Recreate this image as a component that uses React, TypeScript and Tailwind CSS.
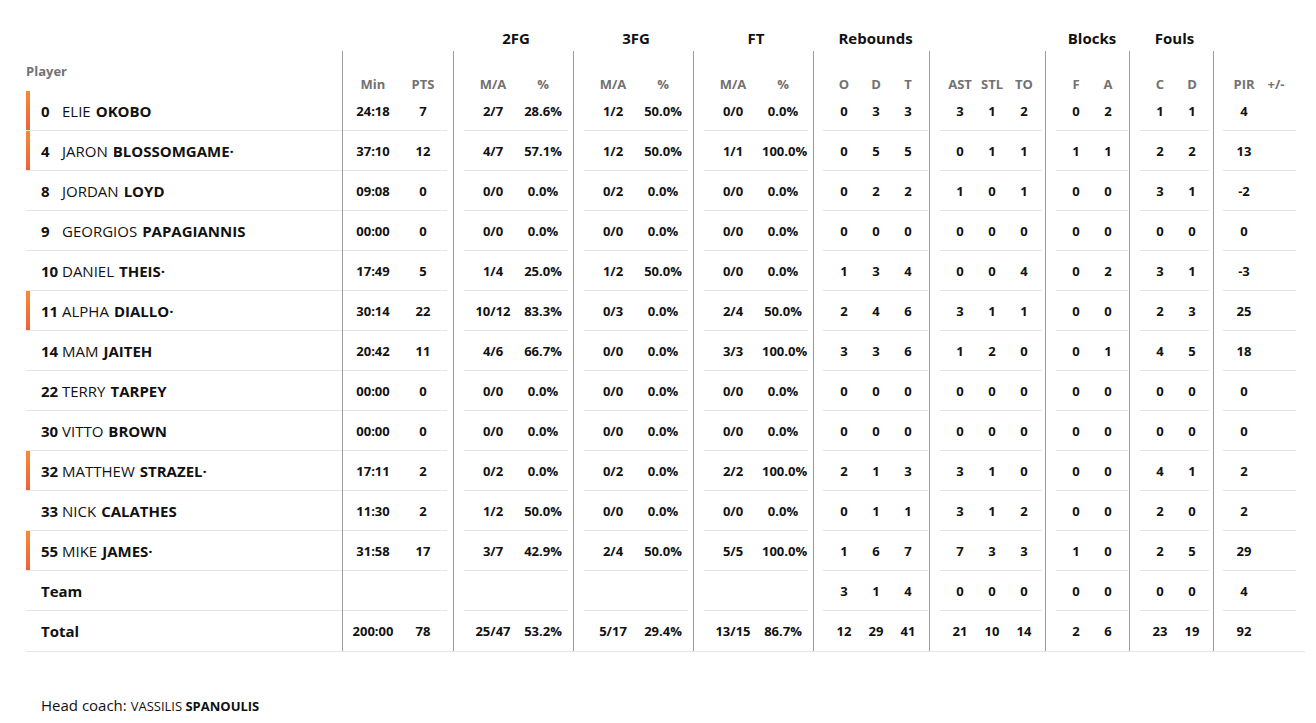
import React from "react";

type P = {
  no: string;
  first: string;
  last: string;
  starter?: boolean;
  kind?: "team" | "total";
  label?: string;
  s: string[];
};

// s: Min, PTS, 2M/A, 2%, 3M/A, 3%, FTM/A, FT%, O, D, T, AST, STL, TO, F, A, C, D, PIR, +/-
const ROWS: P[] = [
  { no: "0", first: "ELIE", last: "OKOBO", starter: true, s: ["24:18", "7", "2/7", "28.6%", "1/2", "50.0%", "0/0", "0.0%", "0", "3", "3", "3", "1", "2", "0", "2", "1", "1", "4", ""] },
  { no: "4", first: "JARON", last: "BLOSSOMGAME·", starter: true, s: ["37:10", "12", "4/7", "57.1%", "1/2", "50.0%", "1/1", "100.0%", "0", "5", "5", "0", "1", "1", "1", "1", "2", "2", "13", ""] },
  { no: "8", first: "JORDAN", last: "LOYD", s: ["09:08", "0", "0/0", "0.0%", "0/2", "0.0%", "0/0", "0.0%", "0", "2", "2", "1", "0", "1", "0", "0", "3", "1", "-2", ""] },
  { no: "9", first: "GEORGIOS", last: "PAPAGIANNIS", s: ["00:00", "0", "0/0", "0.0%", "0/0", "0.0%", "0/0", "0.0%", "0", "0", "0", "0", "0", "0", "0", "0", "0", "0", "0", ""] },
  { no: "10", first: "DANIEL", last: "THEIS·", s: ["17:49", "5", "1/4", "25.0%", "1/2", "50.0%", "0/0", "0.0%", "1", "3", "4", "0", "0", "4", "0", "2", "3", "1", "-3", ""] },
  { no: "11", first: "ALPHA", last: "DIALLO·", starter: true, s: ["30:14", "22", "10/12", "83.3%", "0/3", "0.0%", "2/4", "50.0%", "2", "4", "6", "3", "1", "1", "0", "0", "2", "3", "25", ""] },
  { no: "14", first: "MAM", last: "JAITEH", s: ["20:42", "11", "4/6", "66.7%", "0/0", "0.0%", "3/3", "100.0%", "3", "3", "6", "1", "2", "0", "0", "1", "4", "5", "18", ""] },
  { no: "22", first: "TERRY", last: "TARPEY", s: ["00:00", "0", "0/0", "0.0%", "0/0", "0.0%", "0/0", "0.0%", "0", "0", "0", "0", "0", "0", "0", "0", "0", "0", "0", ""] },
  { no: "30", first: "VITTO", last: "BROWN", s: ["00:00", "0", "0/0", "0.0%", "0/0", "0.0%", "0/0", "0.0%", "0", "0", "0", "0", "0", "0", "0", "0", "0", "0", "0", ""] },
  { no: "32", first: "MATTHEW", last: "STRAZEL·", starter: true, s: ["17:11", "2", "0/2", "0.0%", "0/2", "0.0%", "2/2", "100.0%", "2", "1", "3", "3", "1", "0", "0", "0", "4", "1", "2", ""] },
  { no: "33", first: "NICK", last: "CALATHES", s: ["11:30", "2", "1/2", "50.0%", "0/0", "0.0%", "0/0", "0.0%", "0", "1", "1", "3", "1", "2", "0", "0", "2", "0", "2", ""] },
  { no: "55", first: "MIKE", last: "JAMES·", starter: true, s: ["31:58", "17", "3/7", "42.9%", "2/4", "50.0%", "5/5", "100.0%", "1", "6", "7", "7", "3", "3", "1", "0", "2", "5", "29", ""] },
  { no: "", first: "", last: "", kind: "team", label: "Team", s: ["", "", "", "", "", "", "", "", "3", "1", "4", "0", "0", "0", "0", "0", "0", "0", "4", ""] },
  { no: "", first: "", last: "", kind: "total", label: "Total", s: ["200:00", "78", "25/47", "53.2%", "5/17", "29.4%", "13/15", "86.7%", "12", "29", "41", "21", "10", "14", "2", "6", "23", "19", "92", ""] },
];

type G = {
  title: string;
  outer: string;
  body: string;
  titlePad: string;
  spacer: string;
  cols: string[];
  heads: string[];
  start: number;
};

const GROUPS: G[] = [
  { title: "", outer: "w-[111px]", body: "border-l border-[#9b9b9b] pl-0 pr-[6px]", titlePad: "pl-[1px] pr-[6px]", spacer: "w-0", cols: ["w-[60px]", "w-[40px]"], heads: ["Min", "PTS"], start: 0 },
  { title: "2FG", outer: "w-[120px]", body: "border-l border-[#9b9b9b] pl-[10px] pr-[5px]", titlePad: "pl-[11px] pr-[5px]", spacer: "w-0", cols: ["w-[58px]", "w-[42px]"], heads: ["M/A", "%"], start: 2 },
  { title: "3FG", outer: "w-[120px]", body: "border-l border-[#9b9b9b] pl-[10px] pr-[5px]", titlePad: "pl-[11px] pr-[5px]", spacer: "w-0", cols: ["w-[58px]", "w-[42px]"], heads: ["M/A", "%"], start: 4 },
  { title: "FT", outer: "w-[120px]", body: "border-l border-[#9b9b9b] pl-[10px] pr-[5px]", titlePad: "pl-[11px] pr-[5px]", spacer: "w-0", cols: ["w-[58px]", "w-[42px]"], heads: ["M/A", "%"], start: 6 },
  { title: "Rebounds", outer: "w-[116px]", body: "border-l border-[#9b9b9b] pl-[9px] pr-[1px]", titlePad: "pl-[10px] pr-[1px]", spacer: "w-[5px]", cols: ["w-[32px]", "w-[32px]", "w-[32px]"], heads: ["O", "D", "T"], start: 8 },
  { title: "", outer: "w-[116px]", body: "border-l border-[#9b9b9b] pl-[10px] pr-[3px]", titlePad: "pl-[11px] pr-[3px]", spacer: "w-[4px]", cols: ["w-[32px]", "w-[32px]", "w-[32px]"], heads: ["AST", "STL", "TO"], start: 11 },
  { title: "Blocks", outer: "w-[84px]", body: "border-l border-[#9b9b9b] pl-[10px] pr-[1px]", titlePad: "pl-[11px] pr-[1px]", spacer: "w-[4px]", cols: ["w-[32px]", "w-[32px]"], heads: ["F", "A"], start: 14 },
  { title: "Fouls", outer: "w-[84px]", body: "border-l border-[#9b9b9b] pl-[10px] pr-[4px]", titlePad: "pl-[11px] pr-[4px]", spacer: "w-[4px]", cols: ["w-[32px]", "w-[32px]"], heads: ["C", "D"], start: 16 },
  { title: "", outer: "w-[92px]", body: "border-l border-[#9b9b9b] pl-[9px] pr-[9px]", titlePad: "pl-[10px] pr-[9px]", spacer: "w-[5px]", cols: ["w-[32px]", "w-[32px]"], heads: ["PIR", "+/-"], start: 18 },
];

const FONT = { fontFamily: '"Open Sans", "Noto Sans", Arial, sans-serif' };

function StatGroup({ g }: { g: G }) {
  return (
    <div className={`flex flex-col ${g.outer}`}>
      <div className={`h-[31px] flex items-end justify-center pb-[3px] ${g.titlePad}`}>
        <span className="text-[15px] leading-[20px] font-bold text-[#111]">{g.title}</span>
      </div>
      <div className={`flex flex-col ${g.body}`}>
        <div className="h-[40px] flex items-end">
          <div className={`shrink-0 ${g.spacer}`} />
          {g.heads.map((h, i) => (
            <div key={i} className={`${g.cols[i]} shrink-0 text-center text-[13px] leading-[14px] font-bold text-[#727272]`}>
              {h}
            </div>
          ))}
        </div>
        {ROWS.map((r, ri) => (
          <div
            key={ri}
            className={`h-[40px] flex items-center ${ri < ROWS.length - 1 ? "border-b border-[#e6e6e6]" : ""}`}
          >
            <div className={`shrink-0 ${g.spacer}`} />
            {g.cols.map((c, ci) => (
              <div key={ci} className={`${c} shrink-0 text-center text-[13px] leading-[18px] font-bold text-[#111]`}>
                {r.s[g.start + ci]}
              </div>
            ))}
          </div>
        ))}
      </div>
    </div>
  );
}

function PlayerGroup() {
  return (
    <div className="flex flex-col w-[316px]">
      <div className="h-[31px]" />
      <div className="flex flex-col">
        <div className="h-[40px] flex items-center">
          <span className="text-[13px] leading-[16px] font-bold text-[#727272]">Player</span>
        </div>
        {ROWS.map((r, ri) => (
          <div
            key={ri}
            className={`h-[40px] flex items-stretch ${ri < ROWS.length - 1 ? "border-b border-[#e6e6e6]" : ""}`}
          >
            <div
              className={`w-[4px] shrink-0 ${r.starter ? "bg-gradient-to-b from-[#f68a33] to-[#ef5e3d]" : ""}`}
            />
            <div className="pl-[11px] flex items-center text-[15px] leading-[20px] text-[#111]">
              {r.kind ? (
                <span className="font-bold">{r.label}</span>
              ) : (
                <>
                  <span className="inline-block min-w-[20px] font-bold">{r.no}</span>
                  <span className="ml-[1px]">{r.first}</span>
                  <span className="ml-[5px] font-bold">{r.last}</span>
                </>
              )}
            </div>
          </div>
        ))}
      </div>
    </div>
  );
}

export default function App() {
  return (
    <div className="bg-white min-h-[723px] w-[1316px] pl-[26px] pt-[20px]" style={FONT}>
      <div className="flex w-[1279px] border-b border-[#e6e6e6]">
        <PlayerGroup />
        {GROUPS.map((g, i) => (
          <StatGroup key={i} g={g} />
        ))}
      </div>
      <div className="mt-[43px] pl-[15px] leading-[20px] text-[#111]">
        <span className="text-[15px]">Head coach: </span>
        <span className="text-[13px]">VASSILIS </span>
        <span className="text-[13px] font-bold">SPANOULIS</span>
      </div>
    </div>
  );
}
